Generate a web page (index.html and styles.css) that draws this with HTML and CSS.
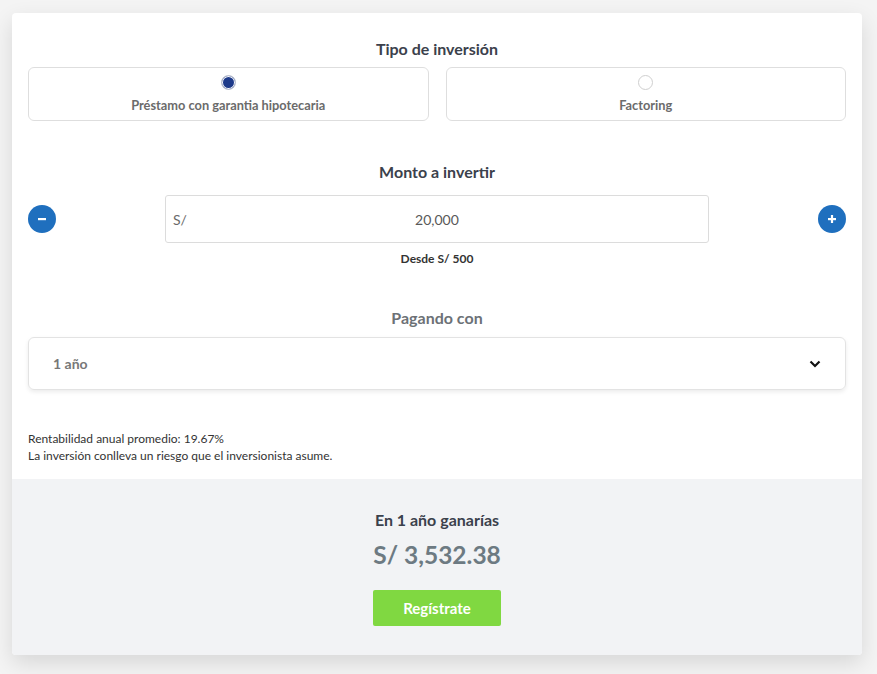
FILE: index.html
```html
<!DOCTYPE html>
<html lang="es">
<head>
<meta charset="utf-8">
<link rel="stylesheet" href="styles.css">
</head>
<body>
<div class="card">
  <div class="top">
    <h2 class="title">Tipo de inversión</h2>
    <div class="options">
      <label class="option">
        <span class="radio checked"></span>
        <span class="opt-label">Préstamo con garantia hipotecaria</span>
      </label>
      <label class="option">
        <span class="radio"></span>
        <span class="opt-label">Factoring</span>
      </label>
    </div>

    <h2 class="title t2">Monto a invertir</h2>
    <div class="amount-row">
      <button class="circle-btn" aria-label="menos">
        <svg width="10" height="10" viewBox="0 0 10 10"><rect x="1" y="4" width="8" height="2.2" fill="#fff"/></svg>
      </button>
      <div class="amount-input">
        <span class="cur">S/</span>
        <span class="val">20,000</span>
      </div>
      <button class="circle-btn" aria-label="más">
        <svg width="10" height="10" viewBox="0 0 10 10"><rect x="1" y="4" width="8" height="2.2" fill="#fff"/><rect x="3.9" y="1" width="2.2" height="8" fill="#fff"/></svg>
      </button>
    </div>
    <p class="desde">Desde S/ 500</p>

    <h2 class="title t3 muted">Pagando con</h2>
    <div class="select">
      <span>1 año</span>
      <svg width="12" height="8" viewBox="0 0 12 8"><path d="M1.5 1.5 L6 6 L10.5 1.5" fill="none" stroke="#111" stroke-width="2.2"/></svg>
    </div>

    <div class="info">
      <p>Rentabilidad anual promedio: 19.67%</p>
      <p>La inversión conlleva un riesgo que el inversionista asume.</p>
    </div>
  </div>
  <div class="bottom">
    <p class="earn">En 1 año ganarías</p>
    <p class="total">S/ 3,532.38</p>
    <button class="cta">Regístrate</button>
  </div>
</div>
</body>
</html>
```

FILE: styles.css
```css
* { box-sizing: border-box; }
html, body { margin: 0; padding: 0; }
body {
  background: #f4f4f4;
  font-family: "Lato", "Open Sans", sans-serif;
  padding: 13px 15px 19px 12px;
}
.card {
  width: 850px;
  background: #fff;
  border-radius: 4px;
  box-shadow: 0 8px 22px rgba(0,0,0,0.12);
  overflow: hidden;
}
.top { padding: 26px 16px 15px 16px; }
.title {
  margin: 0;
  text-align: center;
  font-size: 16px;
  font-weight: 700;
  color: #3b414c;
  line-height: 20px;
}
.title.muted { color: #6c7176; }
.options {
  display: grid;
  grid-template-columns: 1fr 1fr;
  gap: 17px;
  margin-top: 8px;
}
.option {
  height: 54px;
  border: 1px solid #dedede;
  border-radius: 6px;
  display: flex;
  flex-direction: column;
  align-items: center;
  padding-top: 7px;
}
.radio {
  width: 15px; height: 15px;
  border-radius: 50%;
  border: 1px solid #cfcfcf;
  background: #fff;
}
.radio.checked {
  background: #1d3a8a;
  border: 1px solid #c9cdd6;
  box-shadow: inset 0 0 0 1px #fff;
}
.opt-label {
  margin-top: 7px;
  font-size: 12.8px;
  font-weight: 700;
  color: #6b6b6b;
}
.t2 { margin-top: 41px; }
.amount-row {
  display: flex;
  align-items: center;
  justify-content: space-between;
  margin-top: 13px;
}
.circle-btn {
  width: 28px; height: 28px;
  border-radius: 50%;
  background: #1f6fbe;
  border: none;
  padding: 0;
  display: flex;
  align-items: center;
  justify-content: center;
}
.amount-input {
  width: 544px;
  height: 48px;
  border: 1px solid #dcdcdc;
  border-radius: 3px;
  display: flex;
  align-items: center;
  padding: 0 7px;
  font-size: 14px;
  color: #595959;
}
.amount-input .cur { color: #6a6a6a; }
.amount-input .val { flex: 1; text-align: center; margin-right: 14px; }
.desde {
  margin: 8px 0 0;
  text-align: center;
  font-size: 12px;
  font-weight: 700;
  color: #333;
}
.t3 { margin-top: 42px; }
.select {
  margin-top: 9px;
  height: 53px;
  border: 1px solid #e3e3e3;
  border-radius: 6px;
  box-shadow: 0 2px 4px rgba(0,0,0,0.08);
  display: flex;
  align-items: center;
  justify-content: space-between;
  padding: 0 24px 0 24px;
  font-size: 14px;
  font-weight: 700;
  color: #777;
}
.info { margin-top: 40px; font-size: 12px; color: #333; line-height: 17px; }
.info p { margin: 0; }
.bottom {
  background: #f2f3f5;
  height: 176px;
  display: flex;
  flex-direction: column;
  align-items: center;
  padding-top: 31px;
}
.earn { margin: 0; font-size: 16px; font-weight: 700; color: #3b414c; line-height: 20px; }
.total { margin: 11px 0 0; font-size: 24.5px; font-weight: 700; color: #6d7a82; line-height: 28px; }
.cta {
  margin-top: 21px;
  width: 128px; height: 36px;
  border: none;
  border-radius: 2px;
  background: #80d841;
  color: #fff;
  font-family: inherit;
  font-size: 15px;
  font-weight: 700;
}
```
